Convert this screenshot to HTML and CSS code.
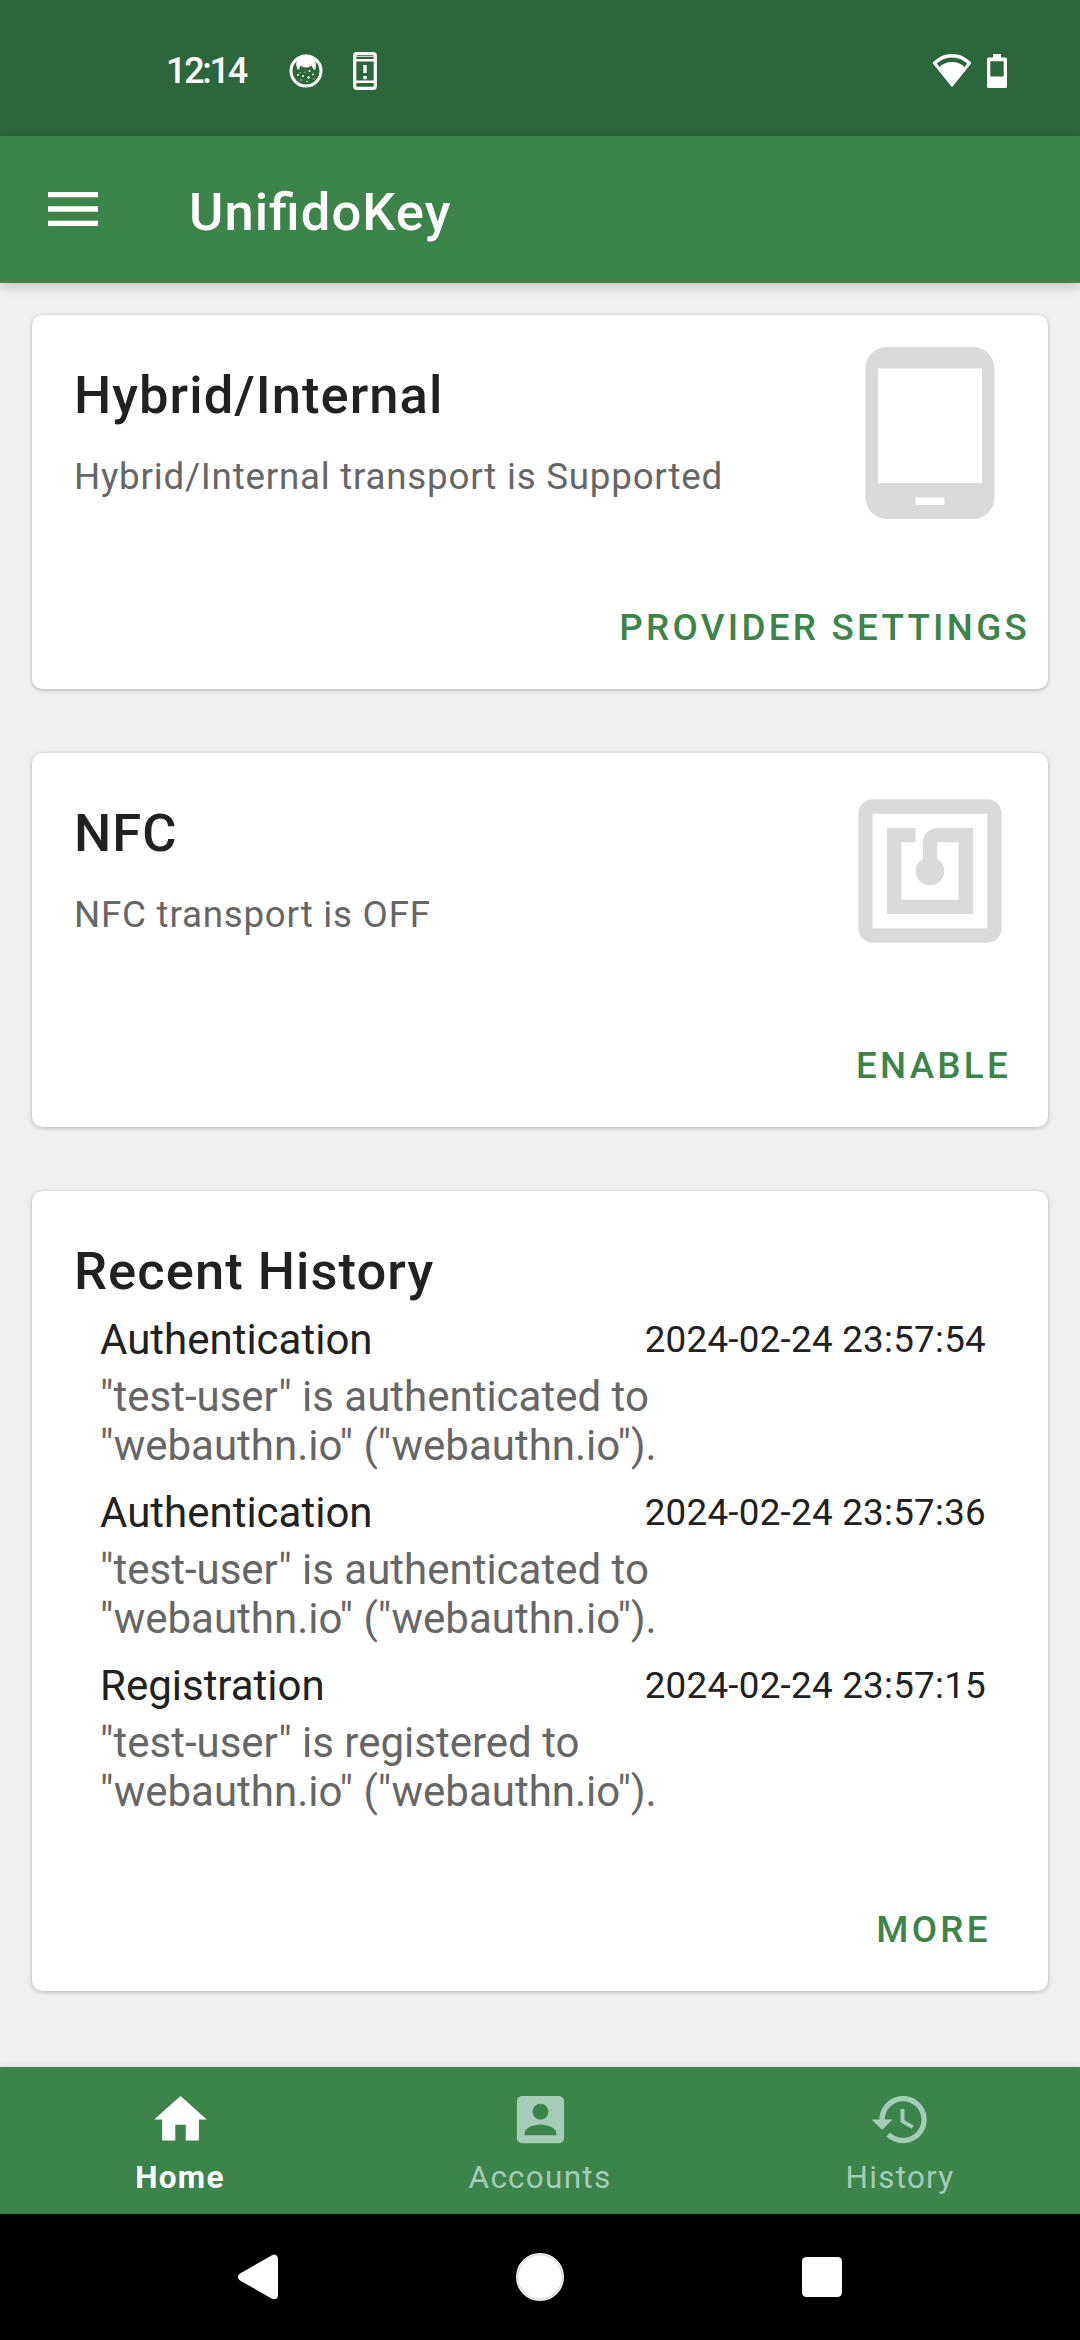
FILE: index.html
```html
<!DOCTYPE html>
<html lang="en">
<head>
<meta charset="utf-8">
<title>UnifidoKey</title>
<link rel="stylesheet" href="styles.css">
</head>
<body>
<div class="screen">
  <div class="status-bar">
    <span class="clock">12:14</span>
    <svg class="icon-cat" viewBox="0 0 34 34">
      <circle cx="17" cy="17" r="15" fill="none" stroke="#fff" stroke-width="3"/>
      <path fill="#fff" d="M7 10Q9 2 17 2T27 10L26.500 15.500H24.500L22.500 11.500Q20.500 13.500 17 13.500T11.500 11.500L10 15.500H8.500z"/>
      <g fill="#fff"><circle cx="9" cy="21" r="1"/><circle cx="14" cy="22" r="1"/><circle cx="19.500" cy="23.500" r="1.200"/><circle cx="24" cy="20.500" r=".9"/><circle cx="20.500" cy="17" r="1"/><circle cx="12" cy="26" r=".7"/><circle cx="18" cy="27.500" r=".8"/><circle cx="16" cy="18" r=".6"/><circle cx="25" cy="25" r=".6"/><circle cx="11" cy="18.500" r=".6"/></g>
    </svg>
    <svg class="icon-device" viewBox="0 0 24 38">
      <rect x="1.700" y="1.700" width="20.600" height="34.600" rx="2" fill="none" stroke="#fff" stroke-width="3.200"/>
      <path fill="#fff" d="M2 4.200h20v.8H2zM3 7h18v2.500H3zM3 28.500h18V31H3zM10.300 13h3.400v8h-3.400zM10.300 24h3.400v3.200h-3.400z"/>
    </svg>
    <svg class="icon-wifi" viewBox="0 0 40 34">
      <path fill="#fff" fill-rule="evenodd" d="M20 0C12.300 0 5.500 3.300.5 9L20 33.300 39.500 9C34.500 3.300 27.700 0 20 0zM20 3.500c5.800 0 11 2.100 15.200 6l-2.700 3.400C29 9.900 24.800 8.100 20 8.100S11 9.900 7.500 12.900L4.800 9.500C9 5.600 14.200 3.500 20 3.500z"/>
    </svg>
    <svg class="icon-battery" viewBox="0 0 20 34">
      <path fill="#fff" fill-rule="evenodd" d="M6 0h8v3.500h4.500q1.500 0 1.500 1.500v27.500q0 1.500-1.500 1.500h-17Q0 34 0 32.500V5q0-1.500 1.500-1.500H6zM3.300 7.200v15.300h13.400V7.200z"/>
    </svg>
  </div>

  <header class="app-bar">
    <svg class="menu-icon" viewBox="0 0 50 34"><path fill="#fff" d="M0 0h50v5.300H0zM0 14.350h50v5.300H0zM0 28.700h50V34H0z"/></svg>
    <h1 class="app-title">UnifidoKey</h1>
  </header>

  <main class="content">
    <section class="card">
      <div class="card-head">
        <div>
          <h2 class="card-title">Hybrid/Internal</h2>
          <p class="card-sub">Hybrid/Internal transport is Supported</p>
        </div>
        <svg class="card-icon" viewBox="0 0 24 24"><path d="M18 0H6C4.340 0 3 1.340 3 3v18c0 1.660 1.340 3 3 3h12c1.660 0 3-1.340 3-3V3c0-1.660-1.340-3-3-3zm-4 22h-4v-1h4v1zm5.250-3H4.750V3h14.500v16z"/></svg>
      </div>
      <div class="actions"><button class="button">PROVIDER SETTINGS</button></div>
    </section>

    <section class="card">
      <div class="card-head">
        <div>
          <h2 class="card-title">NFC</h2>
          <p class="card-sub">NFC transport is OFF</p>
        </div>
        <svg class="card-icon" viewBox="0 0 24 24"><path d="M20 2H4c-1.100 0-2 .9-2 2v16c0 1.100.9 2 2 2h16c1.100 0 2-.9 2-2V4c0-1.100-.9-2-2-2zm0 18H4V4h16v16zM18 6h-5c-1.100 0-2 .9-2 2v2.280c-.6.350-1 .980-1 1.720 0 1.100.9 2 2 2s2-.9 2-2c0-.740-.4-1.380-1-1.720V8h3v8H8V8h2V6H6v12h12V6z"/></svg>
      </div>
      <div class="actions"><button class="button">ENABLE</button></div>
    </section>

    <section class="card history-card">
      <h2 class="card-title">Recent History</h2>
      <ul class="history">
        <li class="entry">
          <div class="entry-head"><span>Authentication</span><time class="entry-time">2024-02-24 23:57:54</time></div>
          <p class="entry-text">"test-user" is authenticated to<br>"webauthn.io" ("webauthn.io").</p>
        </li>
        <li class="entry">
          <div class="entry-head"><span>Authentication</span><time class="entry-time">2024-02-24 23:57:36</time></div>
          <p class="entry-text">"test-user" is authenticated to<br>"webauthn.io" ("webauthn.io").</p>
        </li>
        <li class="entry">
          <div class="entry-head"><span>Registration</span><time class="entry-time">2024-02-24 23:57:15</time></div>
          <p class="entry-text">"test-user" is registered to<br>"webauthn.io" ("webauthn.io").</p>
        </li>
      </ul>
      <div class="actions"><button class="button">MORE</button></div>
    </section>
  </main>

  <nav class="tabs">
    <a class="tab tab-active"><svg class="tab-icon" viewBox="0 0 24 24"><path d="M10 20v-6h4v6h5v-8h3L12 3 2 12h3v8z"/></svg><span>Home</span></a>
    <a class="tab"><svg class="tab-icon" viewBox="0 0 24 24"><path d="M3 5v14c0 1.100.890 2 2 2h14c1.100 0 2-.9 2-2V5c0-1.100-.9-2-2-2H5c-1.110 0-2 .9-2 2zm12 4c0 1.660-1.340 3-3 3s-3-1.340-3-3 1.340-3 3-3 3 1.340 3 3zm-9 8c0-2 4-3.100 6-3.100s6 1.100 6 3.100v1H6v-1z"/></svg><span>Accounts</span></a>
    <a class="tab"><svg class="tab-icon" viewBox="0 0 24 24"><path d="M13 3c-4.970 0-9 4.030-9 9H1l3.890 3.890.070.140L9 12H6c0-3.870 3.130-7 7-7s7 3.130 7 7-3.130 7-7 7c-1.930 0-3.680-.790-4.940-2.060l-1.420 1.420C8.270 19.990 10.510 21 13 21c4.970 0 9-4.030 9-9s-4.030-9-9-9zm-1 5v5l4.280 2.540.720-1.210-3.500-2.080V8H12z"/></svg><span>History</span></a>
  </nav>

  <div class="system-nav">
    <svg class="nav-icon" viewBox="0 0 50 50"><path fill="#fff" stroke="#fff" stroke-width="8" stroke-linejoin="round" d="M9 25L41 6.800V43.200z"/></svg>
    <svg class="nav-icon" viewBox="0 0 50 50"><circle cx="25" cy="25" r="24" fill="#fff"/><circle cx="25" cy="25" r="22.300" fill="none" stroke="#999" stroke-width=".5"/></svg>
    <svg class="nav-icon" viewBox="0 0 50 50"><rect x="5" y="5" width="40" height="40" rx="4.500" fill="#fff"/></svg>
  </div>
</div>
</body>
</html>
```
FILE: styles.css
```css
* { box-sizing: border-box; margin: 0; padding: 0; }

body { font-family: Roboto, sans-serif; color: #212121; background: #f0f0f0; }

.screen { width: 1080px; height: 2340px; display: flex; flex-direction: column; overflow: hidden; }

.status-bar { height: 136px; background: #2d663a; display: flex; align-items: center; padding: 6px 73px 0 166px; }
.clock { width: 123px; font-weight: 500; font-size: 36px; line-height: 42px; letter-spacing: -2.3px; padding-bottom: 1px; color: #fff; }
.icon-cat { width: 34px; height: 34px; }
.icon-device { width: 24px; height: 38px; margin-left: 30px; }
.icon-wifi { width: 40px; height: 34px; margin-left: auto; }
.icon-battery { width: 20px; height: 34px; margin-left: 15px; }

.app-bar { height: 147px; background: #3c844a; display: flex; align-items: center; padding-left: 48px; position: relative; box-shadow: 0 3px 12px rgba(0, 0, 0, .2); }
.menu-icon { width: 50px; height: 34px; margin-bottom: 1px; }
.app-title { margin-left: 91px; padding-top: 4px; font-size: 52.5px; font-weight: 500; line-height: 62px; letter-spacing: 1.05px; font-feature-settings: "liga" 1; color: #fff; }

.content { flex: 1; padding: 32px; display: flex; flex-direction: column; gap: 64px; background: #f0f0f0; }
.card { height: 374px; padding: 32px 0 0 42px; background: #fff; border-radius: 10.5px; box-shadow: 0 1px 4px rgba(0, 0, 0, .28); }
.card-head { display: flex; justify-content: space-between; height: 259px; padding-right: 32px; }
.card-title { margin-top: 17px; font-size: 52.5px; font-weight: 500; line-height: 62px; letter-spacing: 1.05px; }
.card-sub { margin-top: 29px; font-size: 36.75px; line-height: 44px; letter-spacing: .76px; color: #666; }
.card-icon { width: 172px; height: 172px; fill: #dadada; }

.actions { display: flex; justify-content: flex-end; }
.button { min-width: 229px; padding: 0 18px; border: 0; background: none; font: 500 36.75px/44px Roboto, sans-serif; letter-spacing: 3.28px; color: #3c844a; }

.history-card { height: 800px; }
.history { list-style: none; margin: 13px 62px 0 26px; }
.entry { height: 173px; font-size: 42px; line-height: 50px; }
.entry-head { display: flex; justify-content: space-between; }
.entry-time { font-size: 36.75px; line-height: 44px; padding-top: 3px; letter-spacing: .26px; }
.entry-text { margin-top: 7px; line-height: 49px; color: #666; }
.history + .actions { margin-top: 74px; }

.tabs { height: 147px; background: #3c844a; display: flex; position: relative; box-shadow: 0 -1px 8px rgba(0, 0, 0, .08); }
.tab { flex: 1; display: flex; flex-direction: column; align-items: center; padding-top: 21px; font-size: 31.5px; line-height: 38px; letter-spacing: 1.25px; color: #a4ccb6; fill: #a4ccb6; }
.tab-icon { width: 63px; height: 63px; margin-bottom: 8px; }
.tab-active { font-weight: 700; color: #fff; fill: #fff; }

.system-nav { height: 126px; background: #000; display: flex; justify-content: space-between; align-items: center; padding: 0 233px; }
.nav-icon { width: 50px; height: 50px; }
```
